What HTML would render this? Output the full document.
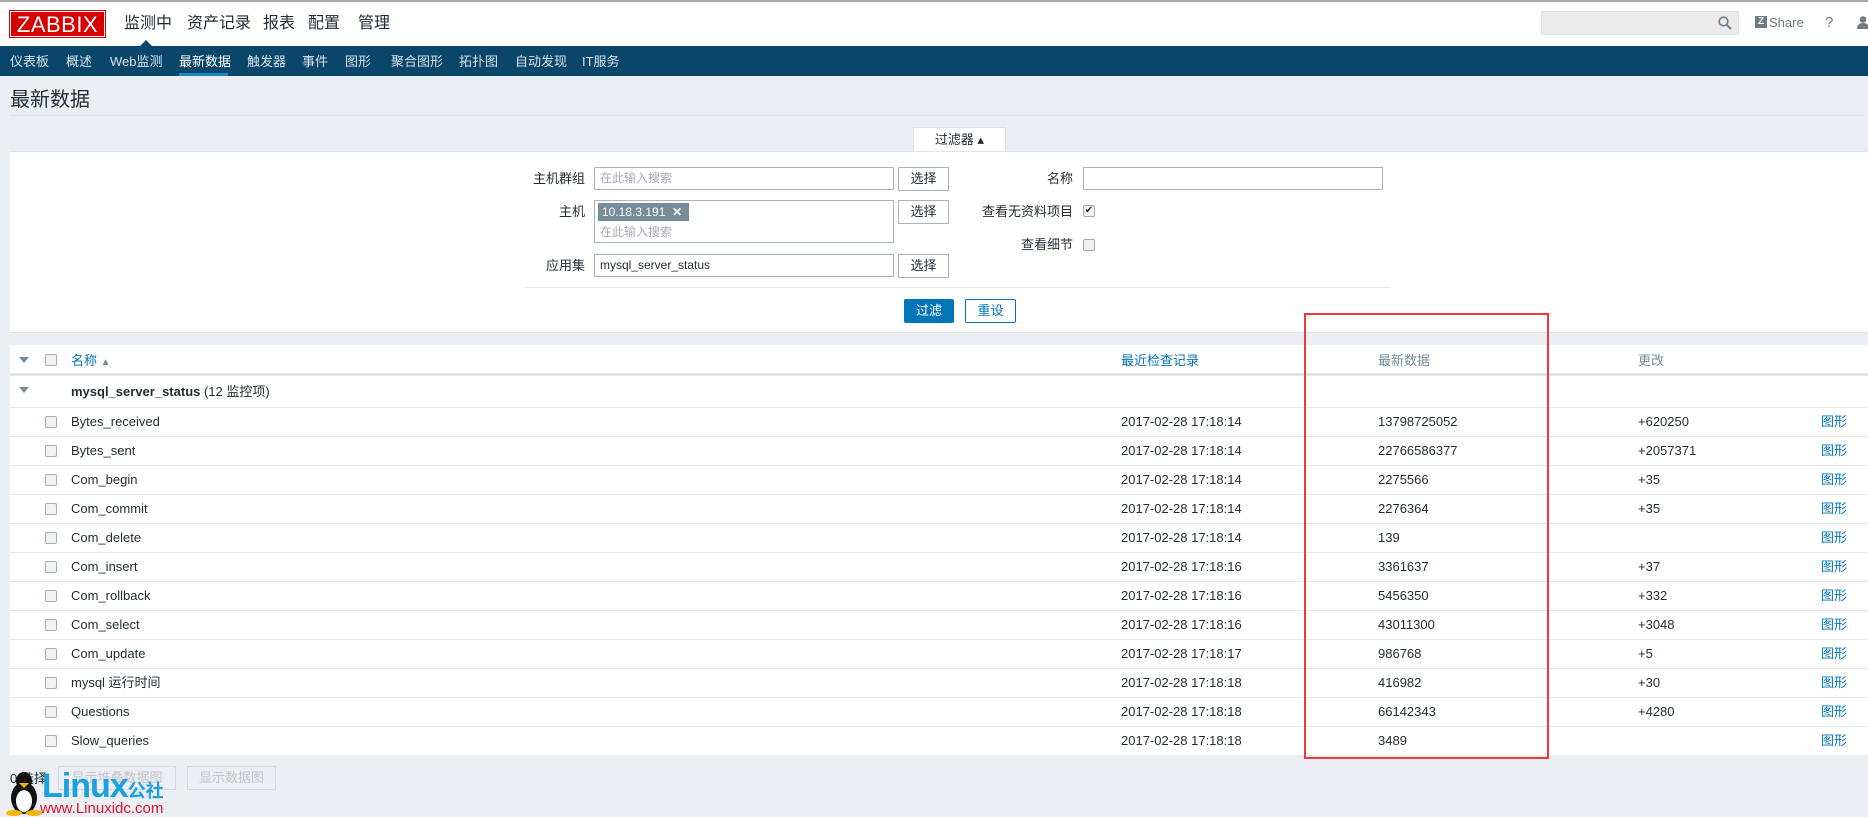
<!DOCTYPE html>
<html><head><meta charset="utf-8"><style>
*{box-sizing:border-box;margin:0;padding:0}
body{width:1868px;height:817px;overflow:hidden;background:#ebeef2;font-family:"Liberation Sans","Noto Sans CJK SC",sans-serif;font-size:13px;line-height:15px;color:#1f2c33;position:relative}
.a{position:absolute;white-space:nowrap}
#hdr{position:absolute;left:0;top:0;width:1868px;height:46px;background:#fff;border-top:2px solid #aaa}
#nav{position:absolute;left:0;top:46px;width:1868px;height:30px;background:#0a466a}
.nv{position:absolute;top:8px;color:#d9e3ea;font-size:13px;line-height:15px}
.mm{position:absolute;top:13px;color:#1f2c33;font-size:16px;line-height:18px}
.inp{position:absolute;background:#fff;border:1px solid #aab4bb;height:23px;line-height:15px}
.btn{position:absolute;background:#fff;border:1px solid #aab4bb;height:24px;width:51px;text-align:center;line-height:22px;font-size:13px}
.lbl{position:absolute;font-size:13px;text-align:right;line-height:15px}
.cb{position:absolute;width:12px;height:12px;border:1px solid #a3acb3;border-radius:2px;background:#f0f2f4}
.row{position:absolute;left:10px;width:1858px;height:29px;border-top:1px solid #e4e8eb;background:#fff}
.row span{position:absolute;top:6px;line-height:15px}
.gl{color:#0275b8}
</style></head><body>
<div id="hdr">
 <div class="a" style="left:10px;top:9px;width:95px;height:26px;background:#d40000;border:1px solid #fff;outline:1px solid #d40000;color:#fff;font-size:22px;line-height:25px;text-align:center;letter-spacing:0.5px">ZABBIX</div>
 <div class="mm" style="left:124px">监测中</div>
 <div class="mm" style="left:187px">资产记录</div>
 <div class="mm" style="left:263px">报表</div>
 <div class="mm" style="left:308px">配置</div>
 <div class="mm" style="left:358px">管理</div>
 <div class="a" style="left:139px;top:38px;width:0;height:0;border-left:7px solid transparent;border-right:7px solid transparent;border-bottom:7px solid #0a466a"></div>
 <div class="a" style="left:1541px;top:9px;width:198px;height:24px;background:#ebebeb;border:1px solid #e2e2e2"></div>
 <svg class="a" style="left:1718px;top:14px" width="14" height="14"><circle cx="5.5" cy="5.5" r="4.3" fill="none" stroke="#6f7b83" stroke-width="1.6"/><line x1="8.7" y1="8.7" x2="13" y2="13" stroke="#6f7b83" stroke-width="2"/></svg>
 <div class="a" style="left:1755px;top:14px;width:12px;height:12px;background:#6f7b83;color:#fff;font-size:10px;font-weight:bold;line-height:12px;text-align:center">Z</div>
 <div class="a" style="left:1769px;top:13px;color:#6f7b83;font-size:13px">Share</div>
 <div class="a" style="left:1825px;top:12px;color:#6f7b83;font-size:15px;line-height:17px">?</div>
 <svg class="a" style="left:1857px;top:14px" width="11" height="13"><circle cx="6" cy="3.5" r="3.3" fill="#6f7b83"/><path d="M0 13 Q0 7 6 7 Q12 7 12 13Z" fill="#6f7b83"/></svg>
</div>
<div id="nav">
 <div class="nv" style="left:10px">仪表板</div>
 <div class="nv" style="left:66px">概述</div>
 <div class="nv" style="left:110px">Web监测</div>
 <div class="nv" style="left:179px;color:#fff">最新数据</div>
 <div class="a" style="left:179px;top:27px;width:49px;height:3px;background:#1e87cb"></div>
 <div class="nv" style="left:247px">触发器</div>
 <div class="nv" style="left:302px">事件</div>
 <div class="nv" style="left:345px">图形</div>
 <div class="nv" style="left:391px">聚合图形</div>
 <div class="nv" style="left:459px">拓扑图</div>
 <div class="nv" style="left:515px">自动发现</div>
 <div class="nv" style="left:582px">IT服务</div>
</div>
<div class="a" style="left:10px;top:89px;font-size:20px;line-height:23px;color:#1f2c33">最新数据</div>
<div class="a" style="left:10px;top:115px;width:1858px;height:1px;background:#dde1e5"></div>
<!-- filter -->
<div class="a" style="left:913px;top:127px;width:93px;height:25px;background:#fff;border:1px solid #dfe4e7;border-bottom:none;text-align:center;line-height:24px;font-size:13px">过滤器 ▴</div>
<div class="a" style="left:10px;top:151px;width:1858px;height:182px;background:#fff;border-top:1px solid #dfe4e7;border-bottom:1px solid #dfe4e7"></div>
<div class="lbl" style="left:500px;width:85px;top:171px">主机群组</div>
<div class="inp" style="left:594px;top:167px;width:300px;color:#aab;padding:3px 5px;font-size:12px">在此输入搜索</div>
<div class="btn" style="left:898px;top:167px">选择</div>
<div class="lbl" style="left:500px;width:85px;top:204px">主机</div>
<div class="inp" style="left:594px;top:200px;width:300px;height:43px"></div>
<div class="a" style="left:598px;top:203px;width:91px;height:18px;background:#768d99;color:#fff;font-size:12px;line-height:18px;padding-left:4px">10.18.3.191&nbsp;&nbsp;<b>✕</b></div>
<div class="a" style="left:600px;top:225px;color:#aab;font-size:12px">在此输入搜索</div>
<div class="btn" style="left:898px;top:200px">选择</div>
<div class="lbl" style="left:500px;width:85px;top:258px">应用集</div>
<div class="inp" style="left:594px;top:254px;width:300px;padding:3px 5px;font-size:12px">mysql_server_status</div>
<div class="btn" style="left:898px;top:254px">选择</div>
<div class="lbl" style="left:960px;width:113px;top:171px">名称</div>
<div class="inp" style="left:1083px;top:167px;width:300px"></div>
<div class="lbl" style="left:960px;width:113px;top:204px">查看无资料项目</div>
<div class="cb" style="left:1083px;top:205px;font-size:10px;line-height:10px;text-align:center">✔</div>
<div class="lbl" style="left:960px;width:113px;top:237px">查看细节</div>
<div class="cb" style="left:1083px;top:239px"></div>
<div class="a" style="left:525px;top:287px;width:866px;height:1px;background:#e4e8eb"></div>
<div class="a" style="left:904px;top:299px;width:50px;height:24px;background:#0275b8;color:#fff;text-align:center;line-height:24px;border-radius:2px">过滤</div>
<div class="a" style="left:965px;top:299px;width:51px;height:24px;background:#fff;border:1px solid #0275b8;color:#0275b8;text-align:center;line-height:22px;border-radius:2px">重设</div>
<!-- table -->
<div class="a" style="left:10px;top:345px;width:1858px;height:410px;background:#fff"></div>
<div class="a" style="left:10px;top:373px;width:1858px;height:3px;background:#dfe4e7"></div>
<div class="a" style="left:19px;top:357px;border-left:5px solid transparent;border-right:5px solid transparent;border-top:6px solid #768d99"></div>
<div class="cb" style="left:45px;top:354px"></div>
<div class="a gl" style="left:71px;top:353px">名称 <span style="color:#768d99;font-size:10px">▲</span></div>
<div class="a gl" style="left:1121px;top:353px">最近检查记录</div>
<div class="a" style="left:1378px;top:353px;color:#768d99">最新数据</div>
<div class="a" style="left:1638px;top:353px;color:#768d99">更改</div>
<div class="a" style="left:19px;top:387px;border-left:5px solid transparent;border-right:5px solid transparent;border-top:6px solid #768d99"></div>
<div class="a" style="left:71px;top:384px"><b>mysql_server_status</b> (12 监控项)</div>
<div class="row" style="top:407px"><div class="cb" style="left:35px;top:8px"></div><span style="left:61px">Bytes_received</span><span style="left:1111px">2017-02-28 17:18:14</span><span style="left:1368px">13798725052</span><span style="left:1628px">+620250</span><span class="gl" style="left:1811px">图形</span></div>
<div class="row" style="top:436px"><div class="cb" style="left:35px;top:8px"></div><span style="left:61px">Bytes_sent</span><span style="left:1111px">2017-02-28 17:18:14</span><span style="left:1368px">22766586377</span><span style="left:1628px">+2057371</span><span class="gl" style="left:1811px">图形</span></div>
<div class="row" style="top:465px"><div class="cb" style="left:35px;top:8px"></div><span style="left:61px">Com_begin</span><span style="left:1111px">2017-02-28 17:18:14</span><span style="left:1368px">2275566</span><span style="left:1628px">+35</span><span class="gl" style="left:1811px">图形</span></div>
<div class="row" style="top:494px"><div class="cb" style="left:35px;top:8px"></div><span style="left:61px">Com_commit</span><span style="left:1111px">2017-02-28 17:18:14</span><span style="left:1368px">2276364</span><span style="left:1628px">+35</span><span class="gl" style="left:1811px">图形</span></div>
<div class="row" style="top:523px"><div class="cb" style="left:35px;top:8px"></div><span style="left:61px">Com_delete</span><span style="left:1111px">2017-02-28 17:18:14</span><span style="left:1368px">139</span><span class="gl" style="left:1811px">图形</span></div>
<div class="row" style="top:552px"><div class="cb" style="left:35px;top:8px"></div><span style="left:61px">Com_insert</span><span style="left:1111px">2017-02-28 17:18:16</span><span style="left:1368px">3361637</span><span style="left:1628px">+37</span><span class="gl" style="left:1811px">图形</span></div>
<div class="row" style="top:581px"><div class="cb" style="left:35px;top:8px"></div><span style="left:61px">Com_rollback</span><span style="left:1111px">2017-02-28 17:18:16</span><span style="left:1368px">5456350</span><span style="left:1628px">+332</span><span class="gl" style="left:1811px">图形</span></div>
<div class="row" style="top:610px"><div class="cb" style="left:35px;top:8px"></div><span style="left:61px">Com_select</span><span style="left:1111px">2017-02-28 17:18:16</span><span style="left:1368px">43011300</span><span style="left:1628px">+3048</span><span class="gl" style="left:1811px">图形</span></div>
<div class="row" style="top:639px"><div class="cb" style="left:35px;top:8px"></div><span style="left:61px">Com_update</span><span style="left:1111px">2017-02-28 17:18:17</span><span style="left:1368px">986768</span><span style="left:1628px">+5</span><span class="gl" style="left:1811px">图形</span></div>
<div class="row" style="top:668px"><div class="cb" style="left:35px;top:8px"></div><span style="left:61px">mysql 运行时间</span><span style="left:1111px">2017-02-28 17:18:18</span><span style="left:1368px">416982</span><span style="left:1628px">+30</span><span class="gl" style="left:1811px">图形</span></div>
<div class="row" style="top:697px"><div class="cb" style="left:35px;top:8px"></div><span style="left:61px">Questions</span><span style="left:1111px">2017-02-28 17:18:18</span><span style="left:1368px">66142343</span><span style="left:1628px">+4280</span><span class="gl" style="left:1811px">图形</span></div>
<div class="row" style="top:726px"><div class="cb" style="left:35px;top:8px"></div><span style="left:61px">Slow_queries</span><span style="left:1111px">2017-02-28 17:18:18</span><span style="left:1368px">3489</span><span class="gl" style="left:1811px">图形</span></div>
<div class="a" style="left:1304px;top:313px;width:245px;height:446px;border:2px solid #f03a3a"></div>
<!-- footer -->
<div class="a" style="left:10px;top:771px">0 选择</div>
<div class="a" style="left:58px;top:766px;width:118px;height:24px;border:1px solid #d4d9dd;color:#c1c7cc;text-align:center;line-height:22px">显示堆叠数据图</div>
<div class="a" style="left:187px;top:766px;width:89px;height:24px;border:1px solid #d4d9dd;color:#c1c7cc;text-align:center;line-height:22px">显示数据图</div>
<svg class="a" style="left:6px;top:770px" width="40" height="46"><ellipse cx="18" cy="28" rx="13" ry="16" fill="#111"/><ellipse cx="18" cy="31" rx="8" ry="11" fill="#fff"/><ellipse cx="18" cy="11" rx="8" ry="9" fill="#111"/><path d="M13 13 L18 18 L23 13Z" fill="#f5b400"/><ellipse cx="8" cy="43" rx="8" ry="3" fill="#f5b400"/><ellipse cx="28" cy="43" rx="8" ry="3" fill="#f5b400"/></svg>
<div class="a" style="left:42px;top:770px;font-size:34px;font-weight:bold;color:#1aa0e0;letter-spacing:-1px;line-height:33px">Linux<span style="font-size:18px;letter-spacing:0;line-height:20px">公社</span></div>
<div class="a" style="left:40px;top:801px;font-size:15px;color:#e8102d;line-height:15px">www.Linuxidc.com</div>
</body></html>
